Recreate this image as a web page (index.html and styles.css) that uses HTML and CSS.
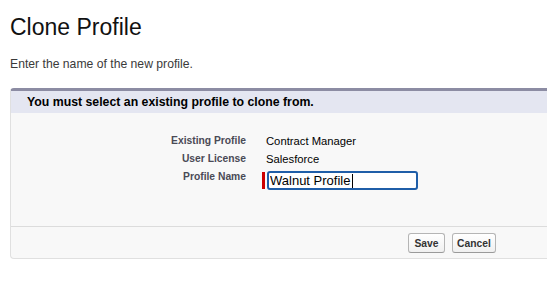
FILE: index.html
```html
<!DOCTYPE html>
<html>
<head>
<meta charset="utf-8">
<link rel="stylesheet" href="styles.css">
</head>
<body>
<h1 class="title">Clone Profile</h1>
<p class="desc">Enter the name of the new profile.</p>
<div class="panel">
  <div class="panel-head">You must select an existing profile to clone from.</div>
  <div class="panel-body">
    <div class="label">Existing Profile</div>
    <div class="value">Contract Manager</div>
    <div class="label">User License</div>
    <div class="value">Salesforce</div>
    <div class="label">Profile Name</div>
    <div class="field">
      <span class="required"></span>
      <span class="input-wrap">
        <input class="text-input" type="text" value="Walnut Profile">
        <span class="caret"></span>
      </span>
    </div>
  </div>
  <div class="panel-foot">
    <button class="btn btn-save" type="button">Save</button>
    <button class="btn" type="button">Cancel</button>
  </div>
</div>
</body>
</html>
```

FILE: styles.css
```css
html, body {
  margin: 0;
  padding: 0;
  background: #fff;
}
body {
  padding: 0 0 0 10px;
  font-family: "Liberation Sans", Arial, Helvetica, sans-serif;
  color: #000;
}
.title {
  margin: 16px 0 0;
  font-size: 23px;
  line-height: 23px;
  font-weight: normal;
  color: #111;
}
.desc {
  margin: 18px 0 17px;
  font-size: 12.2px;
  line-height: 14px;
  color: #3a3a3a;
}
.panel {
  background: #f8f8f8;
  border-top: 3px solid #8c8ca3;
  border-left: 1px solid #e0e0e0;
  border-bottom: 1px solid #e0e0e0;
  border-radius: 4px 0 0 4px;
}
.panel-head {
  height: 22px;
  line-height: 22px;
  padding-left: 16px;
  background: #e4e6f1;
  font-size: 12.3px;
  font-weight: bold;
  color: #000;
  white-space: nowrap;
}
.panel-body {
  display: grid;
  grid-template-columns: 235px 1fr;
  grid-template-rows: 18px 18px 22px;
  column-gap: 16px;
  padding: 19px 0 36px;
  border-bottom: 1px solid #dcdcdc;
}
.label {
  text-align: right;
  font-size: 10.3px;
  font-weight: bold;
  line-height: 18px;
  color: #4a4a56;
  white-space: nowrap;
}
.value {
  padding-left: 4px;
  font-size: 11.25px;
  line-height: 18px;
  color: #000;
}
.field {
  display: flex;
  align-items: flex-start;
  padding-top: 3px;
}
.required {
  width: 3px;
  height: 17px;
  margin-top: 1px;
  margin-right: 2px;
  background: #c00;
}
.input-wrap {
  position: relative;
  display: block;
}
.text-input {
  display: block;
  box-sizing: border-box;
  width: 151px;
  height: 19px;
  margin: 0;
  padding: 0 1px;
  border: 2px solid #1f5ea8;
  border-radius: 3px;
  background: #fff;
  font-family: "Liberation Sans", Arial, Helvetica, sans-serif;
  font-size: 13px;
  color: #000;
  outline: none;
}
.caret {
  position: absolute;
  left: 85px;
  top: 3px;
  width: 1px;
  height: 14px;
  background: #000;
}
.panel-foot {
  display: flex;
  gap: 7px;
  padding: 6px 0 5px 397px;
}
.btn {
  box-sizing: border-box;
  height: 20px;
  margin: 0;
  padding: 0 4px;
  border: 1px solid #b5b5b5;
  border-bottom-color: #9a9a9a;
  border-radius: 3px;
  background: linear-gradient(#ffffff, #f0f0f0);
  font-family: "Liberation Sans", Arial, Helvetica, sans-serif;
  font-size: 10.3px;
  font-weight: bold;
  color: #333;
}
.btn-save {
  width: 37px;
}
```
